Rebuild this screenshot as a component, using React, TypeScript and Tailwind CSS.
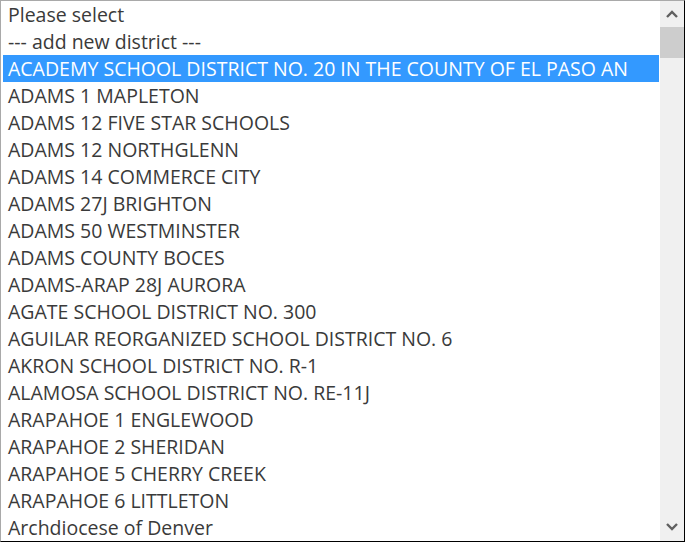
import React from 'react';

const options = [
  'Please select',
  '--- add new district ---',
  'ACADEMY SCHOOL DISTRICT NO. 20 IN THE COUNTY OF EL PASO AN',
  'ADAMS 1 MAPLETON',
  'ADAMS 12 FIVE STAR SCHOOLS',
  'ADAMS 12 NORTHGLENN',
  'ADAMS 14 COMMERCE CITY',
  'ADAMS 27J BRIGHTON',
  'ADAMS 50 WESTMINSTER',
  'ADAMS COUNTY BOCES',
  'ADAMS-ARAP 28J AURORA',
  'AGATE SCHOOL DISTRICT NO. 300',
  'AGUILAR REORGANIZED SCHOOL DISTRICT NO. 6',
  'AKRON SCHOOL DISTRICT NO. R-1',
  'ALAMOSA SCHOOL DISTRICT NO. RE-11J',
  'ARAPAHOE 1 ENGLEWOOD',
  'ARAPAHOE 2 SHERIDAN',
  'ARAPAHOE 5 CHERRY CREEK',
  'ARAPAHOE 6 LITTLETON',
  'Archdiocese of Denver',
];

const App: React.FC = () => {
  const selected = 2;

  return (
    <div className="w-[685px] h-[542px] bg-white">
      <div className="flex h-full border-t border-l border-[#a9a9a9] border-r border-b border-r-black border-b-black font-['Open_Sans',sans-serif]">
        {/* option list */}
        <div className="flex-1 pl-[2px] overflow-hidden">
          {options.map((opt, i) => (
            <div
              key={i}
              className={
                i === selected
                  ? 'h-[27px] leading-[27px] px-[5px] text-[19.5px] whitespace-nowrap overflow-hidden bg-[#3399ff] text-white'
                  : 'h-[27px] leading-[27px] px-[5px] text-[19.5px] whitespace-nowrap overflow-hidden text-[#3a3a3a]'
              }
            >
              {opt}
            </div>
          ))}
        </div>

        {/* scrollbar */}
        <div className="w-[24px] ml-[1px] bg-[#f0f0f0] flex flex-col">
          <div className="h-[26px] flex items-center justify-center">
            <svg width="12" height="8" viewBox="0 0 12 8">
              <path d="M1 7 L6 2 L11 7" fill="none" stroke="#606060" strokeWidth="2.4" />
            </svg>
          </div>
          <div className="h-[31px] bg-[#cdcdcd]" />
          <div className="flex-1" />
          <div className="h-[28px] flex items-center justify-center">
            <svg width="12" height="8" viewBox="0 0 12 8">
              <path d="M1 1 L6 6 L11 1" fill="none" stroke="#606060" strokeWidth="2.4" />
            </svg>
          </div>
        </div>
      </div>
    </div>
  );
};

export default App;
